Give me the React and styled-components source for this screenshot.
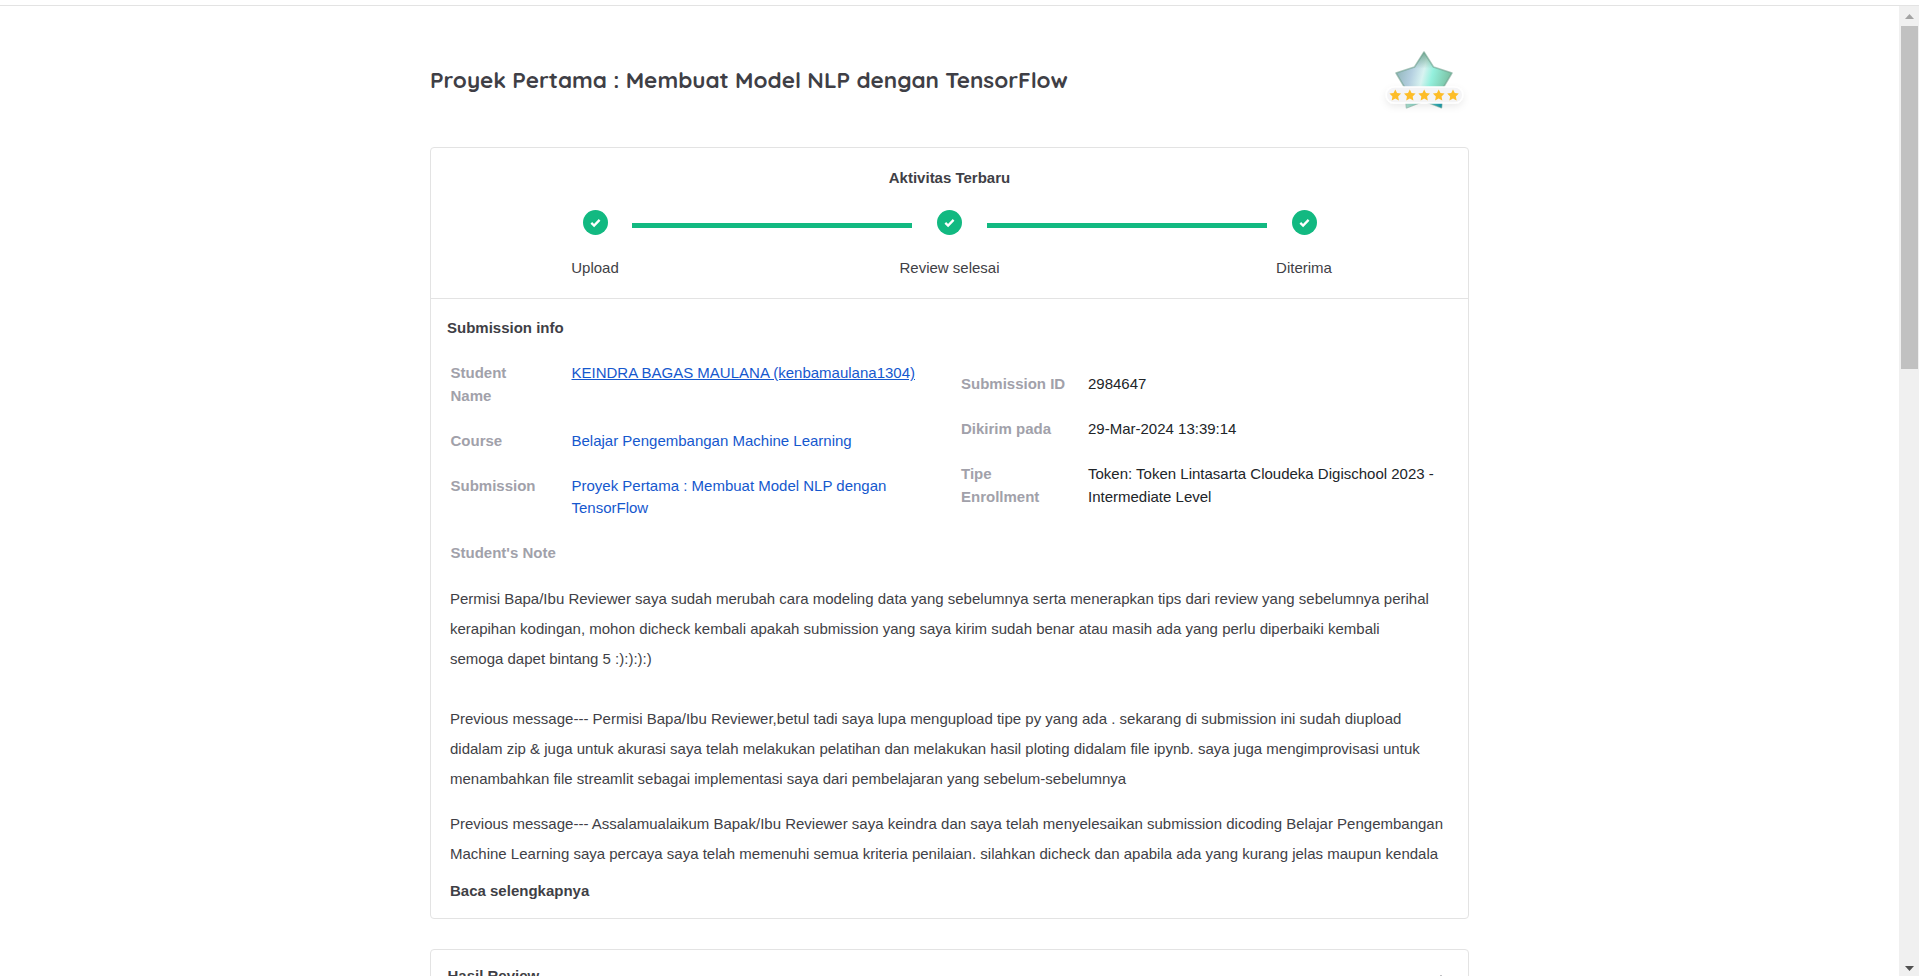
import React from "react";
import styled, { createGlobalStyle } from "styled-components";

const GlobalStyle = createGlobalStyle`
  *, *::before, *::after { box-sizing: border-box; }
  html, body { margin: 0; height: 100%; overflow: hidden; background: #fff; }
  body { font-family: Arial, "Liberation Sans", sans-serif; font-size: 15px; line-height: 22.5px; color: #3f3f46; }
  p, h1, h2, h3, dl, dt, dd { margin: 0; font-size: inherit; font-weight: inherit; }
`;

const Page = styled.div`
  display: flex;
  flex-direction: column;
  height: 976px;
`;

const TopEdge = styled.div`
  flex: none;
  height: 6px;
  border-bottom: 1px solid #e3e3e3;
`;

const Viewport = styled.div`
  display: flex;
  flex: 1;
  min-height: 0;
`;

const Main = styled.main`
  flex: 1;
  display: flex;
  flex-direction: column;
  align-items: center;
  overflow: hidden;
`;

const Header = styled.header`
  flex: none;
  display: flex;
  justify-content: space-between;
  align-items: flex-start;
  width: 1039px;
  height: 141px;
`;

const Title = styled.h1`
  padding-top: 57.5px;
  font-family: Quicksand, Lato, sans-serif;
  font-size: 22.5px;
  line-height: 32px;
  font-weight: 700;
  white-space: nowrap;
`;

const BadgeArt = styled.svg`
  display: block;
  margin-top: 24px;
`;

const Card = styled.section`
  flex: none;
  width: 1039px;
  border: 1px solid #e3e3e3;
  border-radius: 4px;
  height: ${(p) => p.$height}px;
  margin-bottom: 30px;
`;

const Activity = styled.div`
  height: 151px;
  padding-top: 18.5px;
  border-bottom: 1px solid #e3e3e3;
  text-align: center;
`;

const Heading = styled.h2`
  font-weight: 700;
`;

const Steps = styled.div`
  display: flex;
  justify-content: center;
  margin-top: 21px;
`;

const Step = styled.div`
  display: flex;
  flex-direction: column;
  align-items: center;
  width: 74.5px;
  white-space: nowrap;
`;

const StepLabel = styled.span`
  margin-top: 21.5px;
`;

const Connector = styled.div`
  width: 280px;
  height: 5px;
  margin-top: 13px;
  background: #12b981;
`;

const Info = styled.div`
  display: flex;
  flex-direction: column;
  padding: 18px 16px 0;
`;

const Columns = styled.div`
  display: flex;
  padding: 22.5px 0 0 3.5px;
`;

const Fields = styled.dl`
  display: grid;
  grid-template-columns: ${(p) => p.$columns};
  row-gap: 22.5px;
  align-content: start;
  width: ${(p) => p.$width}px;
  padding-top: ${(p) => p.$offset || 0}px;
`;

const Label = styled.dt`
  font-weight: 700;
  color: #a1a1aa;
  width: ${(p) => p.$width || 92}px;
`;

const Value = styled.dd`
  color: #212529;
`;

const Link = styled.a`
  color: #1558ce;
  text-decoration: ${(p) => (p.$underlined ? "underline" : "none")};
`;

const NoteLabel = styled(Label)`
  width: auto;
  padding: 22.5px 0 0 3.5px;
`;

const Note = styled.div`
  padding: 19px 0 0 3px;
  line-height: 30px;
  white-space: nowrap;
`;

const Paragraph = styled.p`
  margin-bottom: ${(p) => p.$gap}px;
`;

const Line = styled.span`
  display: block;
`;

const ReadMore = styled.p`
  padding: 11.5px 0 0 3px;
  font-weight: 700;
`;

const ReviewBar = styled.div`
  display: flex;
  justify-content: space-between;
  padding: 15px 20px 0 16.5px;
`;

const Scrollbar = styled.div`
  flex: none;
  width: 20px;
  padding: 0 1px 5px 2px;
  display: flex;
  flex-direction: column;
  align-items: center;
  background: #f0f0f0;
`;

const Arrow = styled.svg`
  flex: none;
  display: block;
  margin: ${(p) => p.$margin};
`;

const Thumb = styled.div`
  width: 17px;
  height: 343px;
  background: #c1c1c1;
`;

const Track = styled.div`
  flex: 1;
`;

const SMALL_STAR = "M0 -5.8 L1.75 -2.1 L5.8 -1.6 L2.85 1.2 L3.6 5.2 L0 3.2 L-3.6 5.2 L-2.85 1.2 L-5.8 -1.6 L-1.75 -2.1 Z";
const BIG_STAR = "M1424 52 L1433.5 67 L1452 73 L1443 88 L1441.5 107.8 L1424 101 L1406.5 107.8 L1405 88 L1396 73 L1414.5 67 Z";

const Badge = () => (
  <BadgeArt width="99" height="100" viewBox="1370 30 99 100">
    <defs>
      <linearGradient id="starFill" x1="0" y1="0.2" x2="1" y2="0.45">
        <stop offset="0.05" stopColor="#93b8bd" />
        <stop offset="0.3" stopColor="#b4cfe0" />
        <stop offset="0.5" stopColor="#d8f3f1" />
        <stop offset="0.66" stopColor="#94f0dd" />
        <stop offset="0.95" stopColor="#7cc4a6" />
      </linearGradient>
      <linearGradient id="starTip" x1="0" y1="0" x2="0" y2="1">
        <stop offset="0" stopColor="#5f9c80" stopOpacity="0.8" />
        <stop offset="0.3" stopColor="#5f9c80" stopOpacity="0" />
      </linearGradient>
      <linearGradient id="starFoot" x1="0" y1="0" x2="1" y2="0">
        <stop offset="0.2" stopColor="#a5dccb" />
        <stop offset="0.6" stopColor="#57c5c0" />
        <stop offset="0.85" stopColor="#0f93a8" />
      </linearGradient>
      <clipPath id="footClip"><rect x="1390" y="98" width="70" height="14" /></clipPath>
      <filter id="pillShadow" x="-30%" y="-60%" width="160%" height="260%">
        <feDropShadow dx="0" dy="3" stdDeviation="3.5" floodColor="#000" floodOpacity="0.08" />
      </filter>
    </defs>
    <path d={BIG_STAR} fill="url(#starFill)" stroke="#6fa08e" strokeOpacity="0.6" strokeWidth="1.5" strokeLinejoin="round" />
    <path d={BIG_STAR} fill="url(#starTip)" />
    <path d={BIG_STAR} fill="url(#starFoot)" clipPath="url(#footClip)" />
    <rect x="1385.5" y="86.2" width="78" height="17.6" rx="8.8" fill="#fff" filter="url(#pillShadow)" />
    <rect x="1387" y="87.7" width="75" height="14.6" rx="7.3" fill="#f4f4f6" />
    {[1395.3, 1409.8, 1424.2, 1438.7, 1453].map((x) => (
      <path key={x} d={SMALL_STAR} transform={`translate(${x} 95.2)`} fill="#fdbd28" />
    ))}
  </BadgeArt>
);

const Check = () => (
  <svg width="25" height="25" viewBox="0 0 25 25">
    <circle cx="12.5" cy="12.5" r="12.5" fill="#12b981" />
    <path d="M8.3 12.9 L11.1 15.6 L16.6 9.9" fill="none" stroke="#fff" strokeWidth="2.3" />
  </svg>
);

const STEPS = ["Upload", "Review selesai", "Diterima"];

const NOTES = [
  { gap: 30, lines: [
    "Permisi Bapa/Ibu Reviewer saya sudah merubah cara modeling data yang sebelumnya serta menerapkan tips dari review yang sebelumnya perihal",
    "kerapihan kodingan, mohon dicheck kembali apakah submission yang saya kirim sudah benar atau masih ada yang perlu diperbaiki kembali",
    "semoga dapet bintang 5 :):):):)",
  ] },
  { gap: 15, lines: [
    "Previous message--- Permisi Bapa/Ibu Reviewer,betul tadi saya lupa mengupload tipe py yang ada . sekarang di submission ini sudah diupload",
    "didalam zip & juga untuk akurasi saya telah melakukan pelatihan dan melakukan hasil ploting didalam file ipynb. saya juga mengimprovisasi untuk",
    "menambahkan file streamlit sebagai implementasi saya dari pembelajaran yang sebelum-sebelumnya",
  ] },
  { gap: 0, lines: [
    "Previous message--- Assalamualaikum Bapak/Ibu Reviewer saya keindra dan saya telah menyelesaikan submission dicoding Belajar Pengembangan",
    "Machine Learning saya percaya saya telah memenuhi semua kriteria penilaian. silahkan dicheck dan apabila ada yang kurang jelas maupun kendala",
  ] },
];

export default function App() {
  return (
    <>
      <GlobalStyle />
      <Page>
        <TopEdge />
        <Viewport>
          <Main>
            <Header>
              <Title>Proyek Pertama : Membuat Model NLP dengan TensorFlow</Title>
              <Badge />
            </Header>
            <Card $height={772}>
              <Activity>
                <Heading>Aktivitas Terbaru</Heading>
                <Steps>
                  {STEPS.map((s, i) => (
                    <React.Fragment key={s}>
                      {i > 0 && <Connector />}
                      <Step><Check /><StepLabel>{s}</StepLabel></Step>
                    </React.Fragment>
                  ))}
                </Steps>
              </Activity>
              <Info>
                <Heading>Submission info</Heading>
                <Columns>
                  <Fields $columns="121px 1fr" $width={510.5}>
                    <Label>Student Name</Label>
                    <Value><Link $underlined>KEINDRA BAGAS MAULANA (kenbamaulana1304)</Link></Value>
                    <Label>Course</Label>
                    <Value><Link>Belajar Pengembangan Machine Learning</Link></Value>
                    <Label>Submission</Label>
                    <Value><Link>Proyek Pertama : Membuat Model NLP dengan<br />TensorFlow</Link></Value>
                  </Fields>
                  <Fields $columns="127px 1fr" $width={490} $offset={11}>
                    <Label $width={110}>Submission ID</Label>
                    <Value>2984647</Value>
                    <Label>Dikirim pada</Label>
                    <Value>29-Mar-2024 13:39:14</Value>
                    <Label>Tipe Enrollment</Label>
                    <Value>Token: Token Lintasarta Cloudeka Digischool 2023 -<br />Intermediate Level</Value>
                  </Fields>
                </Columns>
                <NoteLabel as="div">Student's Note</NoteLabel>
                <Note>
                  {NOTES.map((n) => (
                    <Paragraph key={n.lines[0]} $gap={n.gap}>
                      {n.lines.map((l) => <Line key={l}>{l}</Line>)}
                    </Paragraph>
                  ))}
                </Note>
                <ReadMore>Baca selengkapnya</ReadMore>
              </Info>
            </Card>
            <Card $height={80}>
              <ReviewBar>
                <Heading>Hasil Review</Heading>
                <svg width="14" height="20" viewBox="0 0 14 20"><path d="M1 18 L7 11 L13 18" fill="none" stroke="#71717a" strokeWidth="1.3" /></svg>
              </ReviewBar>
            </Card>
          </Main>
          <Scrollbar>
            <Arrow $margin="8px 0 7px" width="9" height="5" viewBox="0 0 9 5"><path d="M0 5 L4.5 0 L9 5 Z" fill="#a3a3a3" /></Arrow>
            <Thumb />
            <Track />
            <Arrow $margin="0" width="9" height="5" viewBox="0 0 9 5"><path d="M0 0 L4.5 5 L9 0 Z" fill="#505050" /></Arrow>
          </Scrollbar>
        </Viewport>
      </Page>
    </>
  );
}
